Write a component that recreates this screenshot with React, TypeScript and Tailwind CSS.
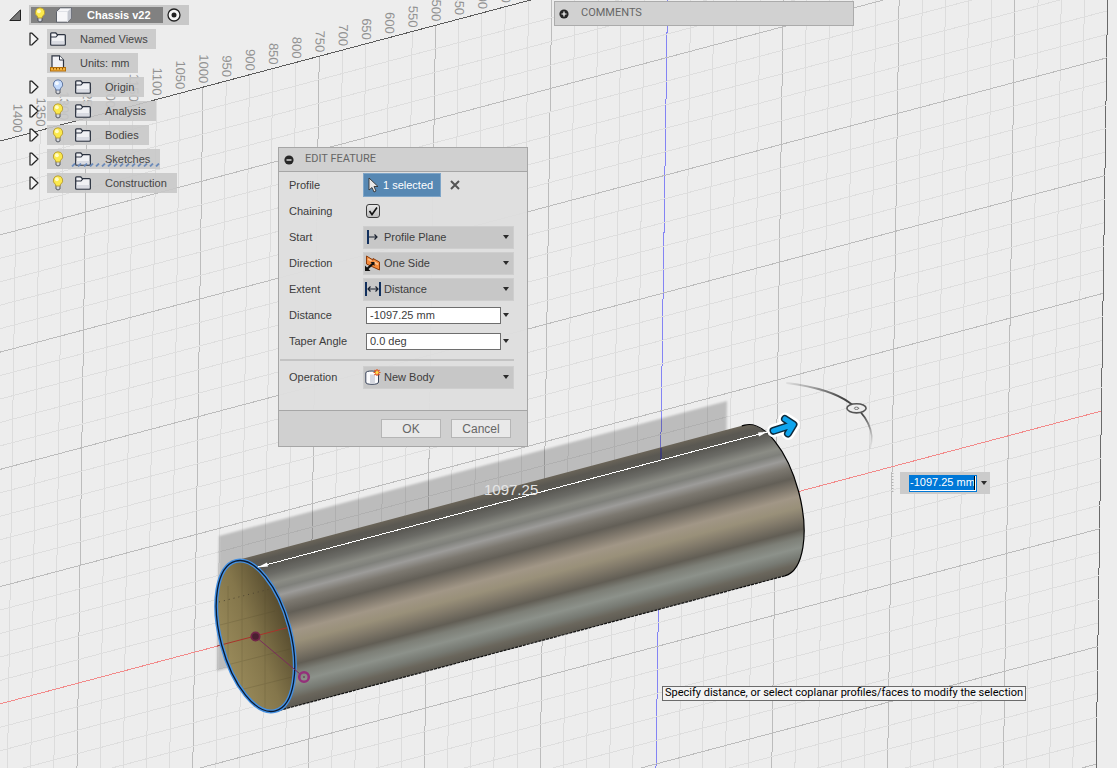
import { ReactNode, useState } from "react";
import clsx from "clsx";

// The ground grid is a parallel projection: `col` counts lines from the blue axis,
// `row` counts lines from the red axis.
const COL_STEP = 23.16;
const ROW_STEP = 23.45;
const COL_LEAN = 0.015;
const ROW_SLOPE = 0.2659;
const LAST_COL = 19;
const FIRST_ROW = -24;

function gridPoint(col: number, row: number) {
  const a = 667.5 + COL_STEP * col;
  const b = 703.9 + ROW_STEP * row;
  const x = (a - COL_LEAN * b) / (1 - COL_LEAN * ROW_SLOPE);
  return { x, y: b - ROW_SLOPE * x };
}

const range = (from: number, to: number) => Array.from({ length: to - from + 1 }, (_, i) => from + i);

function Grid() {
  return (
    <g>
      <g shapeRendering="crispEdges">
        {range(-29, LAST_COL).map((col) => {
          const top = gridPoint(col, FIRST_ROW);
          const endX = 667.5 + COL_STEP * col - COL_LEAN * 780;
          const major = col % 5 === 0;
          const color = col === LAST_COL ? "#6a6a6a" : col === 0 ? "#8484f4" : major ? "#bcbcbc" : "#dcdcdc";
          return <line key={col} x1={top.x} y1={top.y} x2={endX} y2={780} stroke={color} />;
        })}
        {range(FIRST_ROW, 28).map((row) => {
          const end = gridPoint(LAST_COL, row);
          const major = row % 5 === 0;
          const color = row === FIRST_ROW ? "#5c5c5c" : row === 0 ? "#f28a8a" : major ? "#bcbcbc" : "#dedede";
          return <line key={row} x1={0} y1={703.9 + ROW_STEP * row} x2={end.x} y2={end.y} stroke={color} />;
        })}
      </g>
      {/* Ruler labels along the far edge */}
      <g fill="#929292" fontSize="13" textAnchor="end" fontFamily="'Liberation Sans', Arial, sans-serif">
        {range(-28, -7).map((col) => {
          const p = gridPoint(col, FIRST_ROW);
          return (
            <text key={col} transform={`translate(${p.x - 4} ${p.y - 4}) rotate(91)`}>
              {-col * 50}
            </text>
          );
        })}
      </g>
    </g>
  );
}

function Tube() {
  return (
    <g>
      <polygon points="219,536 727,401 725,536 217,671" fill="#000" opacity="0.2" filter="url(#soft)" />
      <g transform="translate(255.5 636) rotate(-14.9)">
        <path d="M0 -78H527A35 78 0 0 1 527 78H0Z" fill="url(#steel)" />
        <path d="M524 -78H527A35 78 0 0 1 527 78" fill="none" stroke="#000" strokeWidth="1.2" />
        <path d="M527 78H0" stroke="#111" strokeWidth="1.2" strokeDasharray="3 1" />
        <ellipse rx="35" ry="77.5" fill="url(#inside)" />
      </g>
      <path d="M219 602L270 589" stroke="#4d4430" strokeDasharray="1 4" />
      <path d="M228 586V660M242 562V690M265 570V708M220 625L275 611M227 665L290 649M240 690L292 677" stroke="#4a4225" opacity="0.2" />
      <path d="M217 646L288 627.5" stroke="#a8332b" />
      <g transform="translate(255.5 636) rotate(-14.9)" fill="none">
        <ellipse rx="35" ry="77.5" stroke="#4490e2" strokeWidth="4" />
        <ellipse rx="35" ry="77.5" stroke="#0a1a30" strokeWidth="1.3" />
      </g>
      {/* Sketch centre and radius point */}
      <path d="M256 637L300 674" stroke="#7b2c5c" />
      <circle cx="255.5" cy="636.5" r="4.2" fill="#4a1f30" stroke="#722548" strokeWidth="1.8" />
      <circle cx="304" cy="677" r="4.8" fill="none" stroke="#94307a" strokeWidth="2.6" />
      <circle cx="304" cy="677" r="1" fill="#6f4a5e" />
      {/* Axis seen in front of the tube, and the dimension line */}
      <path d="M661 448V460" stroke="#1a1a9c" opacity="0.85" />
      <path d="M258 567L767 432" stroke="#fff" shapeRendering="crispEdges" />
      <path d="M257 567.5L267 562.5L268 566.5ZM768 431.5L758 432.5L759 436.5Z" fill="#fff" />
      <text x="484" y="495" fontSize="15" fill="#e4e4e4" fontFamily="'Liberation Sans', Arial, sans-serif">
        1097.25
      </text>
    </g>
  );
}

function Manipulators() {
  return (
    <g fill="none" strokeLinecap="round" strokeLinejoin="round">
      {[
        ["#fff", 13],
        ["#0d2a3c", 8],
        ["#0ea5ee", 5],
      ].map(([color, width]) => (
        <path
          key={color}
          d="M773.5 430.8L793 424.5M785 419L793.5 424.5L788 433.5"
          stroke={color as string}
          strokeWidth={width}
        />
      ))}
      <path d="M787 383C818 387 838 394 850 403C865 413 876 431 870 448" stroke="url(#fade)" strokeWidth="1.8" />
      <ellipse cx="856.5" cy="408.3" rx="9.6" ry="4.6" fill="#ededed" stroke="#555" strokeWidth="1.6" />
      <ellipse cx="856.5" cy="408.3" rx="2.2" ry="1.2" stroke="#777" />
      <path d="M892.5 473V494" stroke="#b4b4b4" strokeWidth="2" strokeDasharray="1 2" strokeLinecap="butt" />
    </g>
  );
}

function Viewport() {
  return (
    <svg className="block h-full w-full" viewBox="0 0 1117 768" preserveAspectRatio="xMinYMin slice" aria-hidden="true">
      <defs>
        <linearGradient id="steel" x1="0" y1="0" x2="0" y2="1">
          <stop offset="0" stopColor="#6a6458" />
          <stop offset="0.04" stopColor="#5a5852" />
          <stop offset="0.09" stopColor="#5b5a55" />
          <stop offset="0.14" stopColor="#6b6b66" />
          <stop offset="0.2" stopColor="#8b8c85" />
          <stop offset="0.24" stopColor="#7f807b" />
          <stop offset="0.285" stopColor="#9c9b99" />
          <stop offset="0.34" stopColor="#7c7870" />
          <stop offset="0.41" stopColor="#635f57" />
          <stop offset="0.47" stopColor="#827a6e" />
          <stop offset="0.53" stopColor="#a19686" />
          <stop offset="0.6" stopColor="#999079" />
          <stop offset="0.66" stopColor="#837b6b" />
          <stop offset="0.74" stopColor="#625e55" />
          <stop offset="0.79" stopColor="#7d7f77" />
          <stop offset="0.85" stopColor="#8c918a" />
          <stop offset="0.91" stopColor="#777a73" />
          <stop offset="0.95" stopColor="#6a665c" />
          <stop offset="1" stopColor="#5c5951" />
        </linearGradient>
        <linearGradient id="inside" x1="0" y1="0.7" x2="1" y2="0.45">
          <stop offset="0" stopColor="#9a8b5b" />
          <stop offset="0.5" stopColor="#84764b" />
          <stop offset="1" stopColor="#564b2e" />
        </linearGradient>
        <linearGradient id="fade" gradientUnits="userSpaceOnUse" x1="787" y1="383" x2="868" y2="449">
          <stop offset="0" stopColor="#555" stopOpacity="0.1" />
          <stop offset="0.5" stopColor="#444" />
          <stop offset="0.75" stopColor="#444" />
          <stop offset="1" stopColor="#555" stopOpacity="0.1" />
        </linearGradient>
        <filter id="soft">
          <feGaussianBlur stdDeviation="1" />
        </filter>
      </defs>
      <Grid />
      <Tube />
      <Manipulators />
    </svg>
  );
}

function FolderIcon() {
  return (
    <svg width="16" height="14" viewBox="0 0 16 14" className="shrink-0">
      <path d="M.7 12.500V1.700Q.7 .8 1.600 .8H5.600L7.300 2.600H14.400Q15.300 2.600 15.300 3.500V12.500Q15.300 13.200 14.400 13.200H1.600Q.7 13.200 .7 12.500Z" fill="#f0f1f4" stroke="#2c3340" strokeWidth="1.300" strokeLinejoin="round" />
      <path d="M1 5H6L7.800 2.800" fill="none" stroke="#2c3340" strokeWidth="1.100" />
      <path d="M1.500 9H14.500V12.500H1.500Z" fill="#cfd2da" opacity="0.7" />
    </svg>
  );
}

function BulbIcon({ on = true }: { on?: boolean }) {
  return (
    <svg width="12" height="16" viewBox="0 0 12 16" className="shrink-0">
      <path d="M4 9.500H8V14Q6 16 4 14Z" fill="#d3d6dd" stroke="#4a4e58" strokeWidth="0.9" />
      <path d="M6 .8A4.600 4.600 0 0 0 3.300 9.200L4 11H8L8.700 9.200A4.600 4.600 0 0 0 6 .8Z" fill={on ? "#fbe94c" : "#c3dafc"} stroke={on ? "#b59a34" : "#5a6f98"} strokeWidth="0.9" />
      <ellipse cx="4.900" cy="4.200" rx="1.900" ry="2" fill={on ? "#fffcc8" : "#f2f8ff"} />
    </svg>
  );
}

function UnitsIcon() {
  return (
    <svg width="16" height="17" viewBox="0 0 16 17" className="shrink-0">
      <path d="M2 12.500V.8H9.500L13.500 5V12.500Z" fill="#f1f1f5" stroke="#2c3340" strokeWidth="1.200" />
      <path d="M9.500 .8V5H13.500" fill="#fff" stroke="#2c3340" />
      <rect x=".5" y="12.500" width="15" height="3.500" fill="#f5b23a" stroke="#b06d0c" />
      <path d="M3.500 13V14.500M6.500 13V14.500M9.500 13V14.500M12.500 13V14.500" stroke="#8a5205" />
    </svg>
  );
}

function Twisty() {
  return (
    <button aria-label="Expand" className="ml-[29px] flex h-5 w-[18px] shrink-0 items-center">
      <svg width="10" height="14" viewBox="0 0 10 14">
        <path d="M1 1L3 1.200L9 7L3 12.800L1 13Z" fill="#f4f4f4" stroke="#222" strokeWidth="1.200" strokeLinejoin="round" />
      </svg>
    </button>
  );
}

type Item = { name: string; bulb?: "on" | "off"; icon?: "units"; active?: boolean };

const items: Item[] = [
  { name: "Named Views" },
  { name: "Units: mm", icon: "units" },
  { name: "Origin", bulb: "off" },
  { name: "Analysis", bulb: "on" },
  { name: "Bodies", bulb: "on" },
  { name: "Sketches", bulb: "on", active: true },
  { name: "Construction", bulb: "on" },
];

function BrowserTree() {
  return (
    <nav className="absolute left-0 top-[5px] text-[11px] text-[#444]">
      <div className="flex h-5 items-center">
        <button aria-label="Collapse" className="flex w-[29px] justify-center">
          <svg width="12" height="12" viewBox="0 0 12 12">
            <path d="M11.500 .8V11.500H.8Z" fill="#777" stroke="#222" />
          </svg>
        </button>
        <div className="flex h-5 items-center bg-[#c8c8c8] pl-[2px]">
          <div className="flex h-4 items-center bg-[#818181] pl-[3px] pr-3 font-bold text-white">
            <BulbIcon />
            <svg width="18" height="16" viewBox="0 0 18 16" className="ml-[9px] mr-[14px]">
              <path d="M1.500 4.500L5.500 .8H16.500V11L12.500 15.200H1.500Z" fill="#f6f6f8" stroke="#5d616a" strokeLinejoin="round" />
              <path d="M12.500 4.500L16.200 1.200V11L12.500 14.800Z" fill="#c5c8d0" />
              <path d="M2 4.500H12.500V15" fill="none" stroke="#dfe1e6" />
            </svg>
            <span>Chassis v22</span>
          </div>
          <label className="flex w-[26px] items-center pl-1">
            <input type="radio" defaultChecked aria-label="Activate Chassis v22" className="peer sr-only" />
            <svg width="14" height="14" viewBox="0 0 14 14">
              <circle cx="7" cy="7" r="6" fill="#f6f6f6" stroke="#222" strokeWidth="1.300" />
              <circle cx="7" cy="7" r="2.500" fill="#222" />
            </svg>
          </label>
        </div>
      </div>
      <ul>
        {items.map((item) => (
          <li key={item.name} className="mt-1 flex h-5 items-center">
            {item.icon ? <span className="w-[47px]" /> : <Twisty />}
            <div className={clsx("relative flex h-5 items-center bg-[#c8c8c8]/90", item.bulb ? "pl-[5px] pr-[10px]" : "pl-[3px] pr-2")}>
              {item.bulb && (
                <span className="mr-[11px]">
                  <BulbIcon on={item.bulb === "on"} />
                </span>
              )}
              {item.icon ? <UnitsIcon /> : <FolderIcon />}
              <span className="ml-[14px]">{item.name}</span>
              {item.active && (
                <svg width="90" height="4" viewBox="0 0 90 4" className="absolute bottom-[2px] left-[24px]">
                  {range(0, 14).map((i) => (
                    <path key={i} d={`M${i * 6 + 1} 3.500L${i * 6 + 4} .5`} stroke="#6d8cba" strokeWidth="1.800" />
                  ))}
                </svg>
              )}
            </div>
          </li>
        ))}
      </ul>
    </nav>
  );
}

function Badge({ plus }: { plus?: boolean }) {
  return (
    <svg width="10" height="10" viewBox="0 0 10 10">
      <circle cx="5" cy="5" r="4.600" fill="#262626" />
      <path d={plus ? "M2.500 5H7.500M5 2.500V7.500" : "M2.500 5H7.500"} stroke="#fff" strokeWidth="1.200" />
    </svg>
  );
}

function Caret() {
  return (
    <svg width="6" height="4" viewBox="0 0 6 4">
      <path d="M0 0H6L3 4Z" fill="#2b2b2b" />
    </svg>
  );
}

function Row({ label, id, children }: { label: string; id: string; children: ReactNode }) {
  return (
    <div className="flex h-[26px] items-center">
      <label htmlFor={id} className="w-[74px] shrink-0">
        {label}
      </label>
      <div className="flex flex-1 items-center">{children}</div>
    </div>
  );
}

function SelectBox({ id, options, icon }: { id: string; options: string[]; icon: ReactNode }) {
  return (
    <div className="relative h-[23px] w-full">
      <select id={id} className="h-full w-full appearance-none border border-[#cecece] bg-[#c7c7c7] pl-5 outline-none">
        {options.map((option) => (
          <option key={option}>{option}</option>
        ))}
      </select>
      <span className="pointer-events-none absolute inset-y-0 left-[2px] flex items-center">{icon}</span>
      <span className="pointer-events-none absolute inset-y-0 right-[5px] flex items-center">
        <Caret />
      </span>
    </div>
  );
}

function ValueBox({ id, initial }: { id: string; initial: string }) {
  const [value, setValue] = useState(initial);
  return (
    <>
      <input
        id={id}
        value={value}
        onChange={(e) => setValue(e.target.value)}
        className="ml-[3px] h-[17px] w-0 flex-1 border border-[#6e6e6e] bg-white px-[3px] outline-none"
      />
      <button aria-label="Recent values" className="w-[13px] pl-[2px]">
        <Caret />
      </button>
    </>
  );
}

const startIcon = (
  <svg width="16" height="16" viewBox="0 0 16 16">
    <path d="M3 1V15" stroke="#12305e" strokeWidth="2" />
    <path d="M4 8H12M9.500 5.500L12 8L9.500 10.500" fill="none" stroke="#1b2230" strokeWidth="1.200" />
  </svg>
);

const sideIcon = (
  <svg width="16" height="16" viewBox="0 0 16 16">
    <path d="M1.500 1L8 5V3.500L14.500 7V15L8 12L1.500 9Z" fill="#f58a3c" stroke="#8a3c0c" />
    <path d="M3 4L6.500 6M9 7L13 9.500" stroke="#fdc28e" strokeWidth="2" />
    <path d="M2 14L8 8.500" stroke="#111" strokeWidth="2.200" />
    <path d="M0 16V10.500L5.500 16ZM9.500 7V11L5.500 7Z" fill="#111" />
  </svg>
);

const extentIcon = (
  <svg width="16" height="16" viewBox="0 0 16 16">
    <path d="M1 1V15M15 1V15" stroke="#12305e" strokeWidth="2" />
    <path d="M3 8H13M5.500 5.500L3 8L5.500 10.500M10.500 5.500L13 8L10.500 10.500" fill="none" stroke="#1b2230" strokeWidth="1.200" />
  </svg>
);

const bodyIcon = (
  <svg width="16" height="16" viewBox="0 0 16 16">
    <path d="M.8 4Q.8 2 7 2T13.500 4V13Q13.500 15.300 7 15.300T.8 13Z" fill="#fbfbfd" stroke="#39445a" />
    <path d="M5 5.500H10V14.500H5Z" fill="#d5d8e0" />
    <path d="M12 0V7M8.500 3.500H15.500M9.500 1L14.500 6M14.500 1L9.500 6" stroke="#e0521b" strokeWidth="1.200" />
    <circle cx="12" cy="3.500" r="1.600" fill="#ffe04a" />
  </svg>
);

function EditFeatureDialog() {
  const [selected, setSelected] = useState(true);
  const buttonStyle = "h-[19px] w-[60px] border border-[#b5b5b5] bg-[#e9e9e9] text-xs text-[#666]";

  return (
    <section className="absolute left-[278px] top-[147px] w-[250px] border border-[#a6a6a6] bg-[#dedede]/95 text-[11px] text-[#3c3c3c]">
      <header className="flex h-6 items-center gap-[11px] border-b border-[#a6a6a6] bg-[#d0d0d0] pl-[5px]">
        <Badge />
        <h2 className="font-[Roboto,sans-serif] text-[11px] text-[#666]">EDIT FEATURE</h2>
      </header>
      <div className="pl-[10px] pr-[13px]">
        <Row label="Profile" id="profile">
          <button id="profile" className="flex h-6 w-[78px] items-center border border-[#7ea5c8] bg-[#5788b3] pl-1 text-white">
            <svg width="11" height="16" viewBox="0 0 11 16" className="mr-1">
              <path d="M1 1V13L4 10.500L6 15L8 14L6 9.500H10Z" fill="#e8e8e8" stroke="#333" strokeWidth="0.900" />
            </svg>
            {selected ? "1 selected" : "Select"}
          </button>
          <button aria-label="Clear selection" onClick={() => setSelected(false)} className="ml-[9px]">
            <svg width="10" height="10" viewBox="0 0 10 10">
              <path d="M1 1L9 9M9 1L1 9" stroke="#555" strokeWidth="2" />
            </svg>
          </button>
        </Row>
        <Row label="Chaining" id="chaining">
          <span className="relative ml-[3px] flex h-[14px] w-[14px]">
            <input id="chaining" type="checkbox" defaultChecked className="peer h-full w-full appearance-none rounded-[3px] border border-[#3c3c3c] bg-linear-to-b from-[#e8e8e8] to-[#bdbdbd]" />
            <svg viewBox="0 0 14 14" className="pointer-events-none absolute inset-0 hidden peer-checked:block">
              <path d="M3.500 7L6 10.500L11 3.500" fill="none" stroke="#111" strokeWidth="1.600" />
            </svg>
          </span>
        </Row>
        <Row label="Start" id="start">
          <SelectBox id="start" options={["Profile Plane"]} icon={startIcon} />
        </Row>
        <Row label="Direction" id="direction">
          <SelectBox id="direction" options={["One Side"]} icon={sideIcon} />
        </Row>
        <Row label="Extent" id="extent">
          <SelectBox id="extent" options={["Distance"]} icon={extentIcon} />
        </Row>
        <Row label="Distance" id="distance">
          <ValueBox id="distance" initial="-1097.25 mm" />
        </Row>
        <Row label="Taper Angle" id="taper">
          <ValueBox id="taper" initial="0.0 deg" />
        </Row>
      </div>
      <hr className="ml-[1px] mr-[13px] mt-[5px] mb-[3px] border-t-2 border-[#c3c3c3]" />
      <div className="pl-[10px] pr-[13px]">
        <Row label="Operation" id="operation">
          <SelectBox id="operation" options={["New Body"]} icon={bodyIcon} />
        </Row>
      </div>
      <footer className="mt-5 flex h-9 items-center justify-end gap-[10px] border-t border-[#a6a6a6] bg-[#d0d0d0] pr-4">
        <button className={buttonStyle}>OK</button>
        <button className={buttonStyle}>Cancel</button>
      </footer>
    </section>
  );
}

export default function App() {
  return (
    <main className="relative h-screen w-full overflow-hidden bg-[#ededed] font-['Liberation_Sans',Arial,sans-serif]">
      <Viewport />
      <BrowserTree />

      <section className="absolute left-[554px] top-[1px] flex h-[25px] w-[300px] items-center gap-3 border border-[#ababab] bg-[#d1d1d1] pl-[4px]">
        <button aria-label="Show comments">
          <Badge plus />
        </button>
        <h2 className="font-[Roboto,sans-serif] text-[11px] text-[#666]">COMMENTS</h2>
      </section>

      <EditFeatureDialog />

      {/* In-canvas value entry */}
      <div className="absolute left-[900px] top-[472px] flex h-[22px] w-[90px] items-center bg-[#cbcbcb] pl-[9px] text-[11px]">
        <div className="flex h-[17px] w-[68px] items-start border border-[#0078d7] bg-white">
          <input aria-label="Distance" defaultValue="-1097.25 mm" className="h-[14px] w-0 flex-1 bg-[#0078d7] text-white outline-none" />
          <span className="h-[14px] w-[2px] border-l border-black" />
        </div>
        <button aria-label="Recent values" className="ml-1">
          <Caret />
        </button>
      </div>

      <div role="status" className="absolute left-[662px] top-[686px] flex h-[15px] items-center whitespace-nowrap border border-[#6b6b6b] bg-[#f3f3f3] px-[2px] font-[Roboto,sans-serif] text-[11px] text-black">
        Specify distance, or select coplanar profiles/faces to modify the selection
      </div>
    </main>
  );
}
